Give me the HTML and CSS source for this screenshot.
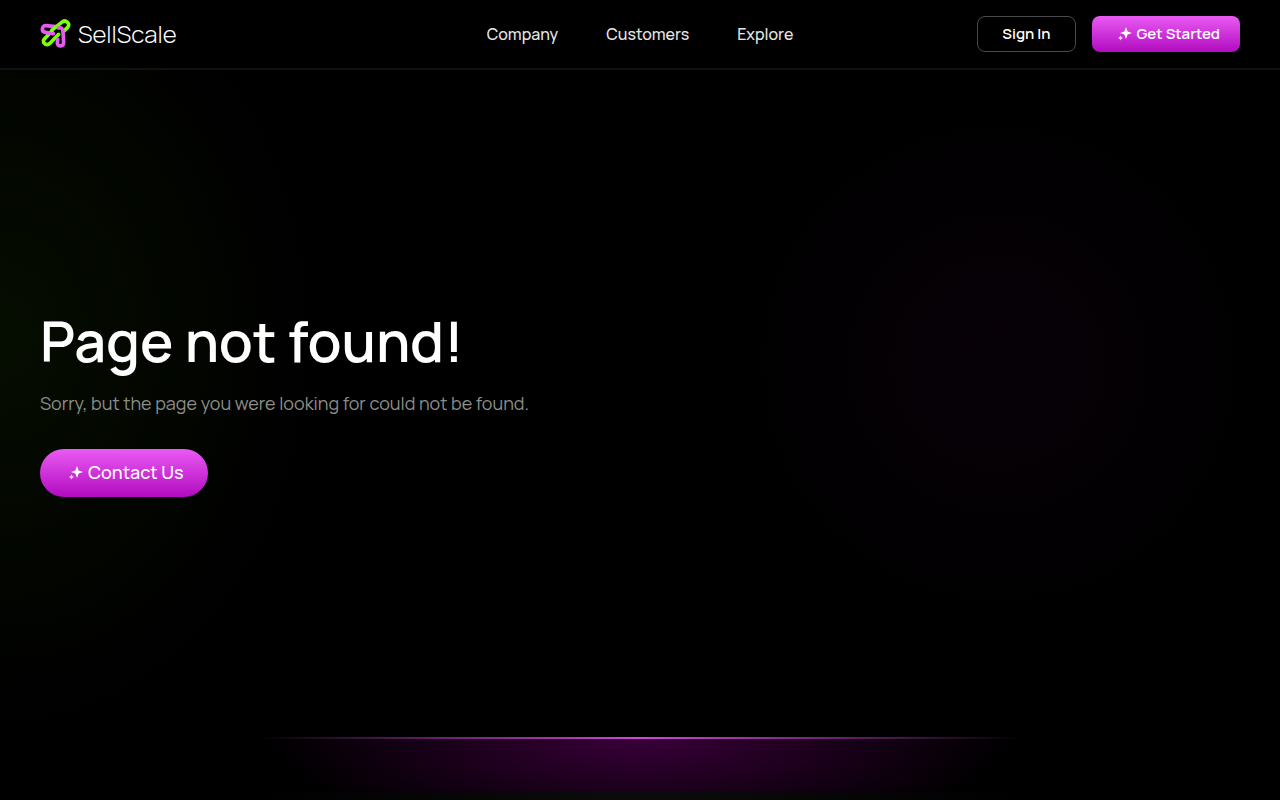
FILE: index.html
```html
<!DOCTYPE html>
<html lang="en">
<head>
    <meta charset="UTF-8">
    <meta name="viewport" content="width=device-width, initial-scale=1.0">
    <title>SellScale - Page not found</title>
    <link rel="stylesheet" href="styles.css">
</head>
<body>
    <header class="navbar">
        <a href="/" class="logo">
            <svg width="32" height="32" viewBox="30 24 96 96" fill="none" stroke-width="11" stroke-linecap="round" stroke-linejoin="round">
                <path d="M86 73L60 100C50 110 34 98 43 87L66 63" stroke="#7CFF0A"/>
                <path d="M78 50L48 47C35 46 33 65 46 67L70 71" stroke="#E45BF0"/>
                <path d="M65 61L95 37C107 27 122 40 113 52L100 65" stroke="#7CFF0A"/>
                <path d="M86 54C95 51 99 58 99 66L101 97C101 111 82 111 82 99L83 88" stroke="#E45BF0"/>
            </svg>
            <span>SellScale</span>
        </a>
        <nav class="nav-links">
            <a href="/company">Company</a>
            <a href="/customers">Customers</a>
            <a href="/explore">Explore</a>
        </nav>
        <div class="nav-actions">
            <a href="/login" class="btn btn-outline">Sign In</a>
            <a href="/signup" class="btn btn-primary">
                <svg class="sparkle" width="14" height="14" viewBox="0 0 14 14" fill="white">
                    <path d="M8 0L9.6 4.4L14 6L9.6 7.6L8 12L6.4 7.6L2 6L6.4 4.4Z"/>
                    <path d="M2.5 8.5L3.4 10.1L5 11L3.4 11.9L2.5 13.5L1.6 11.9L0 11L1.6 10.1Z" opacity="0.8"/>
                </svg>
                Get Started
            </a>
        </div>
    </header>

    <main class="hero">
        <h1>Page not found!</h1>
        <p class="subtitle">Sorry, but the page you were looking for could not be found.</p>
        <a href="/contact" class="btn-contact">
            <svg class="sparkle" width="14" height="14" viewBox="0 0 14 14" fill="white">
                <path d="M8 0L9.6 4.4L14 6L9.6 7.6L8 12L6.4 7.6L2 6L6.4 4.4Z"/>
                <path d="M2.5 8.5L3.4 10.1L5 11L3.4 11.9L2.5 13.5L1.6 11.9L0 11L1.6 10.1Z" opacity="0.8"/>
            </svg>
            Contact Us
        </a>
    </main>

    <footer class="footer">
        <div class="footer-line"></div>
        <div class="footer-glow"></div>
        <div class="footer-base"></div>
    </footer>
</body>
</html>
```
FILE: styles.css
```css
:root {
    --pink-light: #ea5bf3;
    --pink-dark: #b10bc0;
    --text-muted: #8c8e8a;
}

* {
    margin: 0;
    padding: 0;
    box-sizing: border-box;
}

body {
    min-height: 100vh;
    display: flex;
    flex-direction: column;
    background: #000;
    color: #fff;
    font-family: 'Manrope', 'Inter', sans-serif;
}

a {
    color: inherit;
    text-decoration: none;
}

/* Navbar */
.navbar {
    display: grid;
    grid-template-columns: 1fr auto 1fr;
    align-items: center;
    padding: 16px 40px;
    border-bottom: 2px solid #111;
}

.logo {
    display: flex;
    align-items: center;
    gap: 6px;
    font-size: 24px;
    font-weight: 300;
    line-height: 32px;
}

.nav-links {
    display: flex;
    gap: 48px;
    font-size: 16px;
    font-weight: 500;
    color: #e5e5e5;
}

.nav-actions {
    display: flex;
    justify-content: flex-end;
    gap: 16px;
}

.btn {
    display: flex;
    align-items: center;
    gap: 5px;
    height: 36px;
    padding-bottom: 2px;
    border-radius: 8px;
    font-size: 15px;
    font-weight: 600;
}

.btn-outline {
    padding-left: 24px;
    padding-right: 24px;
    border: 1px solid #4a4a4a;
}

.btn-primary {
    padding-left: 26px;
    padding-right: 20px;
    background: linear-gradient(var(--pink-light), var(--pink-dark));
}

.sparkle {
    margin-top: 2px;
}

/* Hero */
.hero {
    flex: 1;
    display: flex;
    flex-direction: column;
    align-items: flex-start;
    justify-content: center;
    padding: 0 40px 6px;
    background:
        radial-gradient(ellipse 320px 400px at 0 40%, #060d00, transparent),
        radial-gradient(circle 300px at 78% 44%, #070107, transparent);
}

h1 {
    font-size: 56px;
    font-weight: 600;
    line-height: 72px;
}

.subtitle {
    margin-top: 12px;
    font-size: 18px;
    font-weight: 400;
    line-height: 28px;
    color: var(--text-muted);
}

.btn-contact {
    display: flex;
    align-items: center;
    gap: 5px;
    height: 48px;
    margin-top: 32px;
    padding: 0 24px 2px 29px;
    border-radius: 24px;
    background: linear-gradient(var(--pink-light), var(--pink-dark));
    font-size: 18px;
    font-weight: 500;
}

/* Footer */
.footer-line {
    height: 2px;
    background: radial-gradient(ellipse 30% 100vw at 50% 50%, #d346dc, transparent);
}

.footer-glow {
    height: 53px;
    background: radial-gradient(ellipse 29% 100px at 50% 0, #380038, transparent);
}

.footer-base {
    height: 8px;
    background: radial-gradient(ellipse 30% 100px at 50% 0, #0c0c0c, transparent);
}
```
